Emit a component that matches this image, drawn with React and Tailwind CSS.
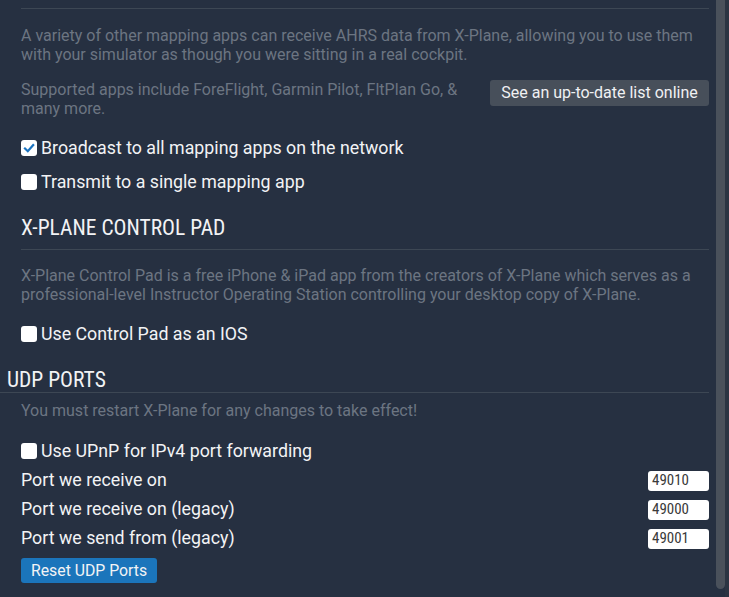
import React from "react";

const body = { fontFamily: 'Roboto, "Noto Sans", sans-serif' };
const cond = {
  fontFamily: '"Roboto Condensed", "Liberation Sans Narrow", "DejaVu Sans Condensed", Roboto, sans-serif',
};

function Box({ checked }) {
  return (
    <span className="w-4 h-4 rounded-[3px] bg-white shrink-0 flex items-center justify-center">
      {checked && (
        <svg width="12" height="12" viewBox="0 0 12 12">
          <path d="M2 6.5 L4.8 9.2 L10.2 3" fill="none" stroke="#1b74c0" strokeWidth="2.2" strokeLinecap="square" />
        </svg>
      )}
    </span>
  );
}

function Check({ label, checked, className = "" }) {
  return (
    <div className={"flex items-center gap-1 h-6 " + className}>
      <Box checked={checked} />
      <span className="text-[17.8px] text-[#f2f3f5] leading-6">{label}</span>
    </div>
  );
}

function Desc({ children, className = "" }) {
  return <p className={"text-[16px] leading-[19px] text-[#6c7582] " + className}>{children}</p>;
}

function PortRow({ label, value }) {
  return (
    <div className="flex items-center justify-between h-[29px]">
      <span className="text-[17.8px] text-[#f2f3f5]">{label}</span>
      <div className="w-[61px] h-5 bg-white rounded-[3px] flex items-center pl-1 text-[15px] text-[#3a3a3a] leading-none" style={cond}>
        {value}
      </div>
    </div>
  );
}

export default function App() {
  return (
    <div className="w-[729px] h-[597px] bg-[#263041] overflow-hidden flex" style={body}>
      <div className="w-[716px] shrink-0 pr-[7px]">
        <div className="pl-[21px]">
          <div className="h-[9px] border-b border-[#3d4754]" />
          <Desc className="mt-[17px]">
            A variety of other mapping apps can receive AHRS data from X-Plane, allowing you to use them with your simulator as though you were sitting in a real cockpit.
          </Desc>
          <div className="flex justify-between items-start mt-4">
            <Desc className="w-[455px]">
              Supported apps include ForeFlight, Garmin Pilot, FltPlan Go, &amp; many more.
            </Desc>
            <button className="h-[26px] w-[219px] bg-[#474f5a] rounded-[3px] text-[16px] text-[#f0f1f3] flex items-center justify-center">
              See an up-to-date list online
            </button>
          </div>
          <Check className="mt-[18px]" label="Broadcast to all mapping apps on the network" checked />
          <Check className="mt-[10px]" label="Transmit to a single mapping app" />
          <div className="mt-5 h-[29px] flex items-center text-[21.5px] text-[#f2f3f5] font-normal" style={cond}>
            X-PLANE CONTROL PAD
          </div>
          <div className="mt-[6px] border-b border-[#3d4754]" />
          <Desc className="mt-4">
            X-Plane Control Pad is a free iPhone &amp; iPad app from the creators of X-Plane which serves as a professional-level Instructor Operating Station controlling your desktop copy of X-Plane.
          </Desc>
          <Check className="mt-[18px]" label="Use Control Pad as an IOS" />
        </div>
        <div className="mt-[22px] pl-[7px] h-6 flex items-center text-[21.5px] text-[#f2f3f5] font-normal" style={cond}>
          UDP PORTS
        </div>
        <div className="border-b border-[#3d4754]" />
        <div className="pl-[21px]">
          <Desc className="mt-2">You must restart X-Plane for any changes to take effect!</Desc>
          <Check className="mt-[19px]" label="Use UPnP for IPv4 port forwarding" />
          <div className="mt-[3px]">
            <PortRow label="Port we receive on" value="49010" />
            <PortRow label="Port we receive on (legacy)" value="49000" />
            <PortRow label="Port we send from (legacy)" value="49001" />
          </div>
          <button className="mt-[5px] h-[25px] px-[10px] bg-[#1b75bb] rounded-[3px] text-[15.8px] text-[#f2f3f5] flex items-center">
            Reset UDP Ports
          </button>
        </div>
      </div>
      <div className="w-[13px] shrink-0 flex">
        <div className="w-[9px] h-[589px] bg-[#4a515b] rounded-b-[5px]" />
        <div className="w-[4px] bg-[#2b3442]" />
      </div>
    </div>
  );
}
